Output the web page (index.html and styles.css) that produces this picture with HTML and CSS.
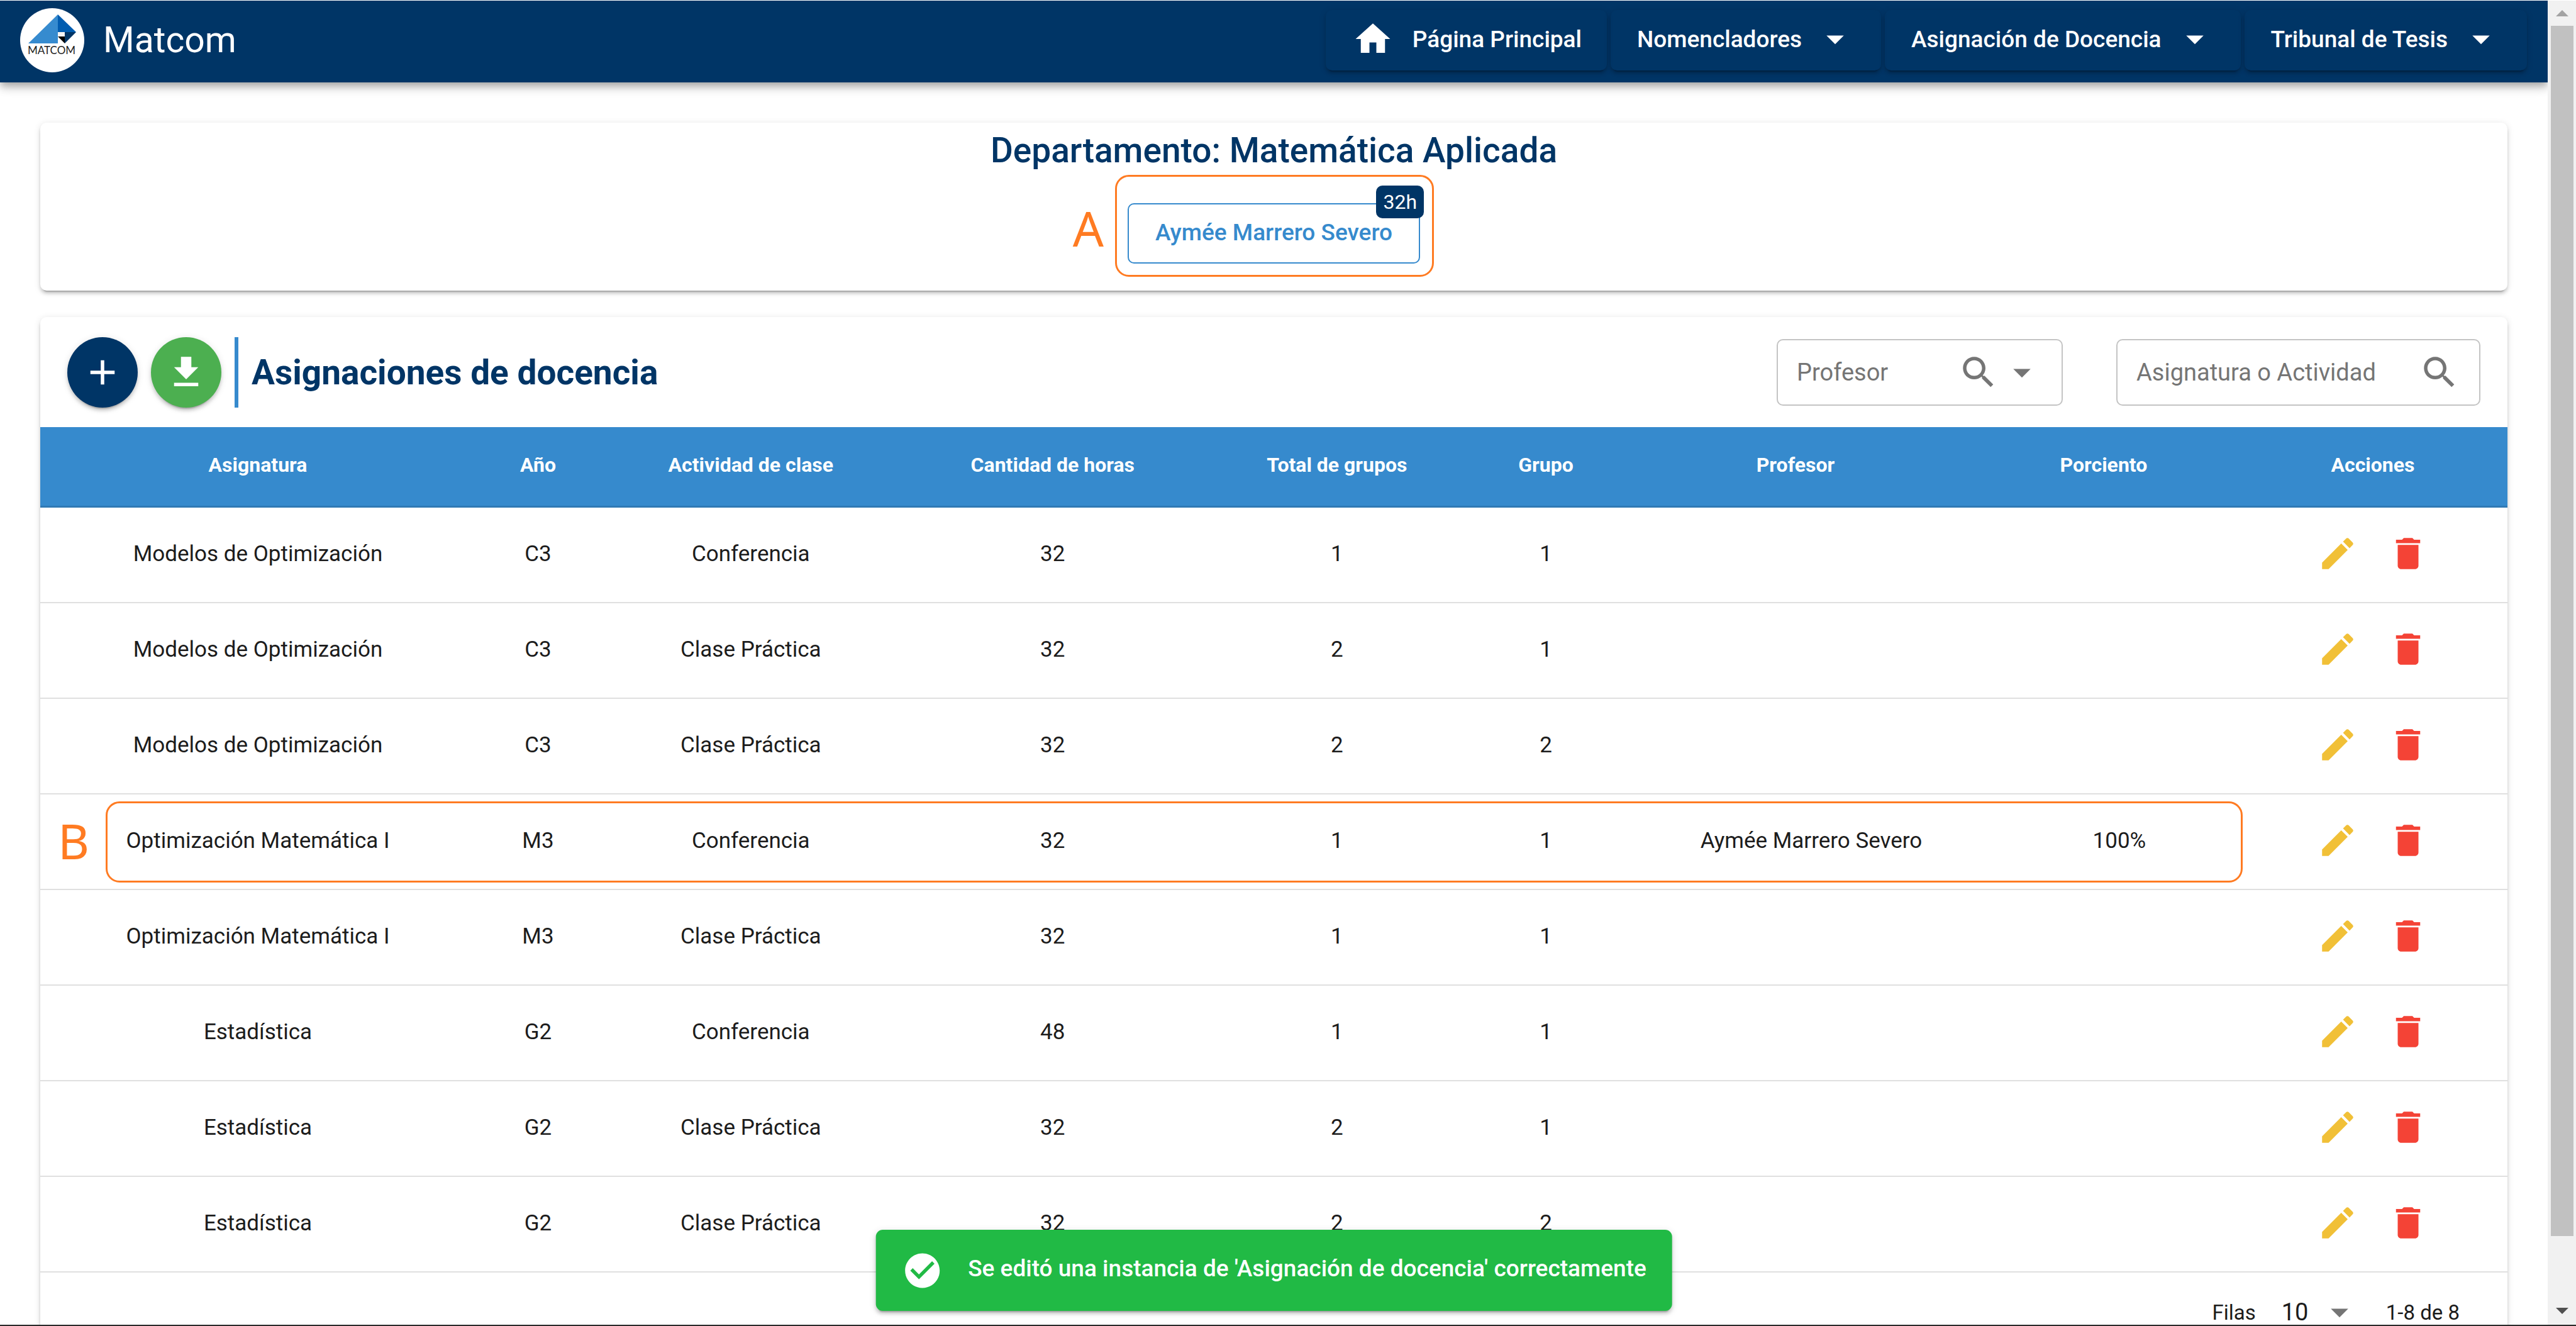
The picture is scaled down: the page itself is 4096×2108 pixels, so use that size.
FILE: index.html
```html
<!DOCTYPE html>
<html lang="es">
<head>
<meta charset="utf-8">
<title>Matcom</title>
<link rel="stylesheet" href="styles.css">
</head>
<body>
<svg class="sprite" aria-hidden="true">
  <symbol id="i-home" viewBox="0 0 24 24"><path d="M10 20v-6h4v6h5v-8h3L12 3 2 12h3v8z"/></symbol>
  <symbol id="i-caret" viewBox="0 0 24 24"><path d="M7 10l5 5 5-5z"/></symbol>
  <symbol id="i-add" viewBox="0 0 24 24"><path d="M19 13h-6v6h-2v-6H5v-2h6V5h2v6h6v2z"/></symbol>
  <symbol id="i-download" viewBox="0 0 24 24"><path d="M19 9h-4V3H9v6H5l7 7 7-7zM5 18v2h14v-2H5z"/></symbol>
  <symbol id="i-search" viewBox="0 0 24 24"><path d="M15.5 14h-.79l-.28-.27C15.41 12.59 16 11.11 16 9.5 16 5.91 13.09 3 9.5 3S3 5.91 3 9.5 5.91 16 9.5 16c1.61 0 3.09-.59 4.23-1.57l.27.28v.79l5 4.99L20.49 19l-4.99-5zm-6 0C7.01 14 5 11.99 5 9.5S7.01 5 9.5 5 14 7.01 14 9.5 11.99 14 9.5 14z"/></symbol>
  <symbol id="i-edit" viewBox="0 0 24 24"><path d="M3 17.25V21h3.75L17.81 9.94l-3.75-3.75L3 17.25zM20.71 7.04c.39-.39.39-1.02 0-1.41l-2.34-2.34c-.39-.39-1.02-.39-1.41 0l-1.83 1.83 3.75 3.75 1.83-1.83z"/></symbol>
  <symbol id="i-delete" viewBox="0 0 24 24"><path d="M6 19c0 1.100.9 2 2 2h8c1.100 0 2-.9 2-2V7H6v12zM19 4h-3.500l-1-1h-5l-1 1H5v2h14V4z"/></symbol>
  <symbol id="i-check" viewBox="0 0 24 24"><path d="M12 2C6.480 2 2 6.480 2 12s4.480 10 10 10 10-4.480 10-10S17.520 2 12 2zm-2 15l-5-5 1.410-1.410L10 14.170l7.590-7.590L19 8l-9 9z"/></symbol>
</svg>

<div class="window">
  <div class="page">
    <header class="appbar">
      <a class="brand" href="#">
        <svg class="logo" viewBox="0 0 102 102" role="img" aria-label="Logo de Matcom">
          <circle cx="51" cy="51" r="51" fill="#fff"/>
          <path d="M60 10L13 56h47z" fill="#368bcf"/>
          <path d="M60 10l29 28H60z" fill="#005cb0"/>
          <path d="M71 38h18L71 56z" fill="#003566"/>
          <path d="M60 38h11v7H60z" fill="#f4f4f4"/>
          <path d="M60 45h11v11z" fill="#000"/>
          <text class="logo-text" x="50" y="73" text-anchor="middle">MATCOM</text>
        </svg>
        <span class="brand-name">Matcom</span>
      </a>
      <nav class="nav">
        <a class="nav-item nav-item-home" href="#"><svg class="icon"><use href="#i-home"/></svg>Página Principal</a>
        <button class="nav-item" type="button">Nomencladores<svg class="icon"><use href="#i-caret"/></svg></button>
        <button class="nav-item" type="button">Asignación de Docencia<svg class="icon"><use href="#i-caret"/></svg></button>
        <button class="nav-item" type="button">Tribunal de Tesis<svg class="icon"><use href="#i-caret"/></svg></button>
      </nav>
    </header>

    <main class="content">
      <section class="card department">
        <h1 class="department-title">Departamento: Matemática Aplicada</h1>
        <div class="professor-wrap">
          <button class="professor" type="button">Aymée Marrero Severo</button>
          <span class="badge">32h</span>
          <span class="frame frame-a"></span>
          <span class="mark mark-a">A</span>
        </div>
      </section>

      <section class="card assignments">
        <div class="toolbar">
          <button class="fab fab-add" type="button" aria-label="Añadir"><svg class="icon"><use href="#i-add"/></svg></button>
          <button class="fab fab-download" type="button" aria-label="Descargar"><svg class="icon"><use href="#i-download"/></svg></button>
          <h2 class="toolbar-title">Asignaciones de docencia</h2>
          <div class="filters">
            <div class="field field-professor">
              <input class="field-input" type="text" placeholder="Profesor" aria-label="Profesor">
              <svg class="icon"><use href="#i-search"/></svg>
              <svg class="icon"><use href="#i-caret"/></svg>
            </div>
            <div class="field field-subject">
              <input class="field-input" type="text" placeholder="Asignatura o Actividad" aria-label="Asignatura o Actividad">
              <svg class="icon"><use href="#i-search"/></svg>
            </div>
          </div>
        </div>

        <table class="table">
          <colgroup>
            <col class="col-subject"><col class="col-year"><col class="col-activity"><col class="col-hours"><col class="col-groups"><col class="col-group"><col class="col-professor"><col class="col-percent"><col class="col-actions">
          </colgroup>
          <thead>
            <tr><th>Asignatura</th><th>Año</th><th>Actividad de clase</th><th>Cantidad de horas</th><th>Total de grupos</th><th>Grupo</th><th>Profesor</th><th>Porciento</th><th>Acciones</th></tr>
          </thead>
          <tbody>
            <tr><td>Modelos de Optimización</td><td>C3</td><td>Conferencia</td><td>32</td><td>1</td><td>1</td><td></td><td></td><td><div class="actions"><button class="action edit" type="button" aria-label="Editar"><svg class="icon"><use href="#i-edit"/></svg></button><button class="action delete" type="button" aria-label="Eliminar"><svg class="icon"><use href="#i-delete"/></svg></button></div></td></tr>
            <tr><td>Modelos de Optimización</td><td>C3</td><td>Clase Práctica</td><td>32</td><td>2</td><td>1</td><td></td><td></td><td><div class="actions"><button class="action edit" type="button" aria-label="Editar"><svg class="icon"><use href="#i-edit"/></svg></button><button class="action delete" type="button" aria-label="Eliminar"><svg class="icon"><use href="#i-delete"/></svg></button></div></td></tr>
            <tr><td>Modelos de Optimización</td><td>C3</td><td>Clase Práctica</td><td>32</td><td>2</td><td>2</td><td></td><td></td><td><div class="actions"><button class="action edit" type="button" aria-label="Editar"><svg class="icon"><use href="#i-edit"/></svg></button><button class="action delete" type="button" aria-label="Eliminar"><svg class="icon"><use href="#i-delete"/></svg></button></div></td></tr>
            <tr class="marked"><td>Optimización Matemática I<span class="frame frame-b"></span><span class="mark mark-b">B</span></td><td>M3</td><td>Conferencia</td><td>32</td><td>1</td><td>1</td><td class="assigned">Aymée Marrero Severo</td><td class="assigned">100%</td><td><div class="actions"><button class="action edit" type="button" aria-label="Editar"><svg class="icon"><use href="#i-edit"/></svg></button><button class="action delete" type="button" aria-label="Eliminar"><svg class="icon"><use href="#i-delete"/></svg></button></div></td></tr>
            <tr><td>Optimización Matemática I</td><td>M3</td><td>Clase Práctica</td><td>32</td><td>1</td><td>1</td><td></td><td></td><td><div class="actions"><button class="action edit" type="button" aria-label="Editar"><svg class="icon"><use href="#i-edit"/></svg></button><button class="action delete" type="button" aria-label="Eliminar"><svg class="icon"><use href="#i-delete"/></svg></button></div></td></tr>
            <tr><td>Estadística</td><td>G2</td><td>Conferencia</td><td>48</td><td>1</td><td>1</td><td></td><td></td><td><div class="actions"><button class="action edit" type="button" aria-label="Editar"><svg class="icon"><use href="#i-edit"/></svg></button><button class="action delete" type="button" aria-label="Eliminar"><svg class="icon"><use href="#i-delete"/></svg></button></div></td></tr>
            <tr><td>Estadística</td><td>G2</td><td>Clase Práctica</td><td>32</td><td>2</td><td>1</td><td></td><td></td><td><div class="actions"><button class="action edit" type="button" aria-label="Editar"><svg class="icon"><use href="#i-edit"/></svg></button><button class="action delete" type="button" aria-label="Eliminar"><svg class="icon"><use href="#i-delete"/></svg></button></div></td></tr>
            <tr><td>Estadística</td><td>G2</td><td>Clase Práctica</td><td>32</td><td>2</td><td>2</td><td></td><td></td><td><div class="actions"><button class="action edit" type="button" aria-label="Editar"><svg class="icon"><use href="#i-edit"/></svg></button><button class="action delete" type="button" aria-label="Eliminar"><svg class="icon"><use href="#i-delete"/></svg></button></div></td></tr>
          </tbody>
        </table>

        <div class="pagination">
          <label for="rows">Filas</label>
          <div class="rows">
            <select id="rows" class="rows-select"><option>10</option></select>
            <svg class="icon"><use href="#i-caret"/></svg>
          </div>
          <span>1-8 de 8</span>
        </div>
      </section>
    </main>

    <div class="toast" role="status"><svg class="icon"><use href="#i-check"/></svg><span class="toast-text">Se editó una instancia de 'Asignación de docencia' correctamente</span></div>
  </div>

  <div class="scrollbar" aria-hidden="true">
    <svg class="scroll-arrow scroll-up" viewBox="0 0 20 10"><path d="M10 0l10 10H0z"/></svg>
    <div class="scroll-track"><div class="scroll-thumb"></div></div>
    <svg class="scroll-arrow scroll-down" viewBox="0 0 20 10"><path d="M0 0h20L10 10z"/></svg>
  </div>
</div>
</body>
</html>
```

FILE: styles.css
```css
:root {
  --navy: #003566;
  --blue: #368acd;
  --orange: #ff7b22;
  --ink: #1c1c1c;
  --grey: #757575;
  --card-shadow: 0 7px 2px -5px rgba(0, 0, 0, .2), 0 5px 5px rgba(0, 0, 0, .14), 0 2px 12px rgba(0, 0, 0, .12);
}

* { box-sizing: border-box; }

body {
  margin: 0;
  height: 100vh;
  overflow: hidden;
  background: #fff;
  color: var(--ink);
  font-family: Roboto, "Liberation Sans", sans-serif;
  font-size: 35px;
}

button, input, select { font: inherit; color: inherit; }
button { border: 0; background: none; padding: 0; }
a { color: inherit; text-decoration: none; }

.sprite { position: absolute; width: 0; height: 0; }
.icon { display: block; flex: none; width: 66px; height: 66px; fill: currentColor; }

.window {
  display: flex;
  height: 100vh;
  padding-top: 1px;
  border-bottom: 2px solid #2b2b2b;
}

.page { position: relative; flex: 1; min-width: 0; overflow: hidden; }

/* App bar */
.appbar {
  display: flex;
  align-items: center;
  justify-content: space-between;
  height: 130px;
  padding: 0 33px 4px 32px;
  background: var(--navy);
  color: #fff;
  box-shadow: 0 5px 10px -2px rgba(0, 0, 0, .2), 0 10px 12px rgba(0, 0, 0, .14), 0 2px 24px rgba(0, 0, 0, .12);
}
.brand { display: flex; align-items: center; gap: 30px; }
.logo { width: 102px; height: 102px; }
.logo-text { font-family: Lato, sans-serif; font-size: 17px; fill: #222; }
.brand-name { font-size: 57px; line-height: 64px; }

.nav { display: flex; gap: 6px; }
.nav-item {
  display: flex;
  align-items: center;
  gap: 20px;
  height: 96px;
  padding: 0 40px 4px 42px;
  border-radius: 10px;
  font-size: 37px;
  font-weight: 500;
  box-shadow: 0 7px 2px -5px rgba(0, 0, 0, .2), 0 5px 5px rgba(0, 0, 0, .14), 0 2px 12px rgba(0, 0, 0, .12);
}
.nav-item-home { gap: 30px; }

/* Cards */
.content { display: flex; flex-direction: column; gap: 42px; padding: 64px; }
.card { border-radius: 10px; background: #fff; box-shadow: var(--card-shadow); }

.department {
  display: flex;
  flex-direction: column;
  align-items: center;
  padding: 12px 0 43px;
}
.department-title {
  margin: 0 0 52px;
  color: var(--navy);
  font-size: 55px;
  font-weight: 500;
  line-height: 64px;
}
.professor-wrap { position: relative; }
.professor {
  display: block;
  height: 96px;
  padding: 0 42px 4px;
  border: 2px solid var(--blue);
  border-radius: 10px;
  color: var(--blue);
  font-size: 37px;
  font-weight: 500;
}
.badge {
  position: absolute;
  top: -28px;
  right: -6px;
  padding: 0 11px;
  border-radius: 10px;
  background: var(--navy);
  color: #fff;
  font-size: 32px;
  line-height: 52px;
}

/* Callouts */
.frame { position: absolute; border: 3px solid var(--orange); border-radius: 22px; pointer-events: none; }
.mark {
  position: absolute;
  color: var(--orange);
  font-family: "Noto Sans", "Open Sans", sans-serif;
  font-size: 77px;
  line-height: 80px;
}
.frame-a { inset: -45px -22px -21px -20px; }
.mark-a { top: 0; right: 100%; margin-right: 38px; }
.frame-b { top: 11px; left: 104px; right: 421px; height: 129px; }
.mark-b { top: 34px; left: 28px; }

/* Toolbar */
.toolbar { display: flex; align-items: center; gap: 21px; padding: 32px 43px 31px; }
.fab {
  display: grid;
  place-items: center;
  width: 112px;
  height: 112px;
  border-radius: 50%;
  color: #fff;
  box-shadow: 0 7px 2px -5px rgba(0, 0, 0, .2), 0 5px 5px rgba(0, 0, 0, .14), 0 2px 12px rgba(0, 0, 0, .12);
}
.fab-add { background: var(--navy); }
.fab-download { background: #4caf50; }
.toolbar-title {
  margin: 0;
  padding-left: 21px;
  border-left: 6px solid var(--blue);
  color: var(--navy);
  font-size: 55px;
  font-weight: 700;
  line-height: 112px;
}
.filters { display: flex; gap: 85px; margin-left: auto; }
.field {
  display: flex;
  align-items: center;
  gap: 3px;
  height: 106px;
  padding: 0 30px;
  border: 2px solid #c4c4c4;
  border-radius: 10px;
  color: var(--grey);
}
.field-professor { width: 455px; }
.field-subject { width: 579px; }
.field-input {
  flex: 1;
  min-width: 0;
  padding: 0;
  border: 0;
  outline: 0;
  background: none;
  font-size: 38px;
}
.field-input::placeholder { color: var(--grey); opacity: 1; }

/* Table */
.table { width: 100%; table-layout: fixed; border-collapse: separate; border-spacing: 0; text-align: center; }
.col-subject { width: 17.64%; }
.col-year { width: 5.07%; }
.col-activity { width: 12.18%; }
.col-hours { width: 12.29%; }
.col-groups { width: 10.76%; }
.col-group { width: 6.17%; }
.col-professor { width: 14.07%; }
.col-percent { width: 10.91%; }
.col-actions { width: 10.91%; }
.table th {
  height: 128px;
  padding: 0 0 6px;
  border-bottom: 3px solid #3079b4;
  background: var(--blue);
  color: #fff;
  font-size: 32px;
  font-weight: 700;
}
.table td { height: 152px; padding: 0 0 4px; border-bottom: 2px solid #e0e0e0; }
.table .assigned { padding-left: 50px; }
.marked { position: relative; }
.actions { display: flex; justify-content: center; gap: 46px; }
.edit { color: #f1c037; }
.delete { color: #f44336; }

.pagination {
  display: flex;
  align-items: center;
  justify-content: flex-end;
  gap: 41px;
  height: 126px;
  padding-right: 76px;
  font-size: 33px;
}
.rows { display: grid; align-items: center; justify-items: end; width: 125px; }
.rows > * { grid-area: 1 / 1; }
.rows .icon { color: var(--grey); pointer-events: none; }
.rows-select { width: 100%; padding: 0; border: 0; background: none; appearance: none; font-size: 38px; }

/* Notification */
.toast {
  position: absolute;
  bottom: 22px;
  left: 50%;
  display: flex;
  align-items: center;
  gap: 40px;
  height: 129px;
  padding: 0 41px;
  border-radius: 11px;
  background: #21ba45;
  color: #fff;
  font-size: 37px;
  font-weight: 500;
  white-space: nowrap;
  transform: translateX(-50%);
  box-shadow: var(--card-shadow);
}
.toast-text { padding-bottom: 6px; }

/* Scrollbar */
.scrollbar {
  display: flex;
  flex-direction: column;
  align-items: center;
  width: 45px;
  background: #f1f1f1;
}
.scroll-arrow { width: 20px; height: 10px; }
.scroll-up { margin: 15px 0; fill: #a3a3a3; }
.scroll-down { margin: 17px 0; fill: #505050; }
.scroll-track { flex: 1; width: 36px; }
.scroll-thumb { height: 95.2%; background: #c1c1c1; }
```
